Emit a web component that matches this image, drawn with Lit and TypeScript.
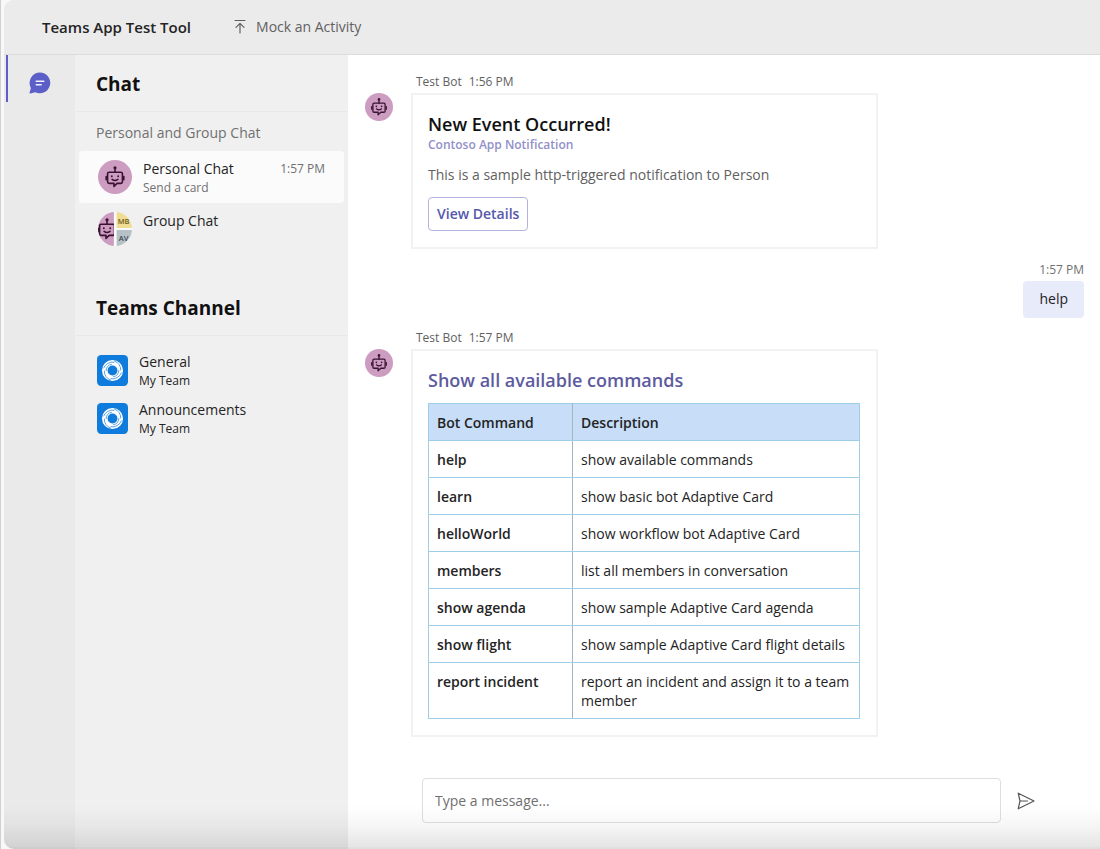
import { LitElement, html, css, svg } from "lit";
import { customElement, property, state } from "lit/decorators.js";

const robot = svg`
  <g fill="none" stroke="#3a1232" stroke-width="1.5" stroke-linejoin="round" stroke-linecap="round">
    <path d="M10.5 11.5h11a1.5 1.5 0 0 1 1.5 1.5v7.5a1.5 1.5 0 0 1-1.5 1.5h-3.5L15 24.8V22h-4.5a1.5 1.5 0 0 1-1.5-1.5V13a1.5 1.5 0 0 1 1.5-1.5z"/>
    <path d="M16 11.5V8M7.7 15.5v3M24.3 15.5v3M13.3 18.3q2.7 2 5.4 0"/>
  </g>
  <g fill="#3a1232"><circle cx="16" cy="7.3" r="1.5"/><circle cx="13" cy="15.3" r=".9"/><circle cx="19" cy="15.3" r=".9"/></g>`;

@customElement("bot-avatar")
export class BotAvatar extends LitElement {
  static styles = css`
    :host { display: block; flex: none; width: 28px; height: 28px; }
    :host([large]) { width: 34px; height: 34px; }
    svg { display: block; width: 100%; height: 100%; }
  `;
  render() {
    return html`<svg viewBox="0 0 32 32" aria-hidden="true"><circle cx="16" cy="16" r="16" fill="#cc9cc1"/>${robot}</svg>`;
  }
}

@customElement("chat-message")
export class ChatMessage extends LitElement {
  @property() time = "";
  static styles = css`
    :host { display: grid; grid-template-columns: 28px minmax(0, 467px); column-gap: 18px; }
    .meta { grid-column: 2; padding-left: 5px; display: flex; gap: 7px; font-size: 12px; line-height: 18px; color: #616161; margin-bottom: 2px; }
    .card { box-sizing: border-box; border: 2px solid #f2f2f2; padding: 16px; padding-left: 15px; background: #fff; }
  `;
  render() {
    return html`
      <div class="meta"><span>Test Bot</span><span>${this.time}</span></div>
      <bot-avatar></bot-avatar>
      <div class="card"><slot></slot></div>`;
  }
}

const commands: [string, string][] = [
  ["help", "show available commands"],
  ["learn", "show basic bot Adaptive Card"],
  ["helloWorld", "show workflow bot Adaptive Card"],
  ["members", "list all members in conversation"],
  ["show agenda", "show sample Adaptive Card agenda"],
  ["show flight", "show sample Adaptive Card flight details"],
  ["report incident", "report an incident and assign it to a team member"],
];

@customElement("app-root")
export class AppRoot extends LitElement {
  @state() private draft = "";

  static styles = css`
    :host { display: block; font-family: "Open Sans", "Noto Sans", sans-serif; font-size: 14px; line-height: 20px; color: #242424; background: #f6f6f6; }
    button, input { font: inherit; color: inherit; }
    button { cursor: pointer; }
    h1, h2, h3, p { margin: 0; }
    .window { box-sizing: border-box; min-height: 100vh; display: grid; grid-template: 55px 1fr / 71px 273px minmax(0, 1fr); margin-left: 4px; border-radius: 10px 0 0 10px; overflow: hidden; position: relative; background: #ebebeb; }
    .frame { background: linear-gradient(90deg, #d0d0d4 0 1px, #f8f8f8 1px); }
    .window::after { content: ""; position: absolute; inset: auto 0 0 0; height: 44px; pointer-events: none; background: linear-gradient(transparent, rgba(0, 0, 0, 0.03) 45%, rgba(0, 0, 0, 0.1)); border-bottom: 2px solid rgba(0, 0, 0, 0.12); box-sizing: border-box; }
    .top { grid-column: 1 / -1; display: flex; align-items: center; gap: 42px; padding-left: 38px; border-bottom: 1px solid #dcdcdc; background: #ebebeb; }
    .brand { font-size: 15px; font-weight: 600; }
    .mock { display: flex; align-items: center; gap: 9px; border: 0; background: none; padding: 0; color: #616161; }
    .rail { background: #eaeaea; padding-left: 2px; }
    .railbtn { display: flex; align-items: center; width: 100%; height: 47px; border: 0; border-left: 2px solid #5b5fc7; background: none; padding: 8px 0 0 21px; }
    .side { background: #f0f0f0; }
    .title { font-size: 19px; line-height: 28px; font-weight: 700; color: #111; padding: 15px 21px 13px; border-bottom: 1px solid #e8e8e8; }
    .second { margin-top: 24px; }
    .sub { padding: 11px 21px 8px; color: #707070; }
    .list { display: grid; }
    .chat { display: flex; align-items: start; gap: 11px; margin: 0 4px; padding: 8px 19px; height: 52px; border: 0; background: none; border-radius: 4px; text-align: left; }
    .chat.on { background: #fbfbfb; }
    .label { display: grid; flex: 1; }
    .label small { font-size: 12px; line-height: 17px; color: #707070; }
    .stamp { font-size: 12px; line-height: 20px; color: #707070; }
    .avatar { flex: none; display: block; }
    .chat > :first-child { align-self: center; }
    .teams { padding: 14px 22px; gap: 8px; }
    .team { display: flex; align-items: center; gap: 11px; border: 0; background: none; padding: 0; text-align: left; height: 40px; }
    .team .label small { color: #242424; }
    .main { background: #fff; display: flex; flex-direction: column; padding: 18px 16px 26px 17px; }
    .head { font-size: 18px; line-height: 26px; font-weight: 600; color: #111; }
    .blue { color: #5d5b9e; }
    .by { font-size: 12px; line-height: 16px; font-weight: 600; color: #9290c9; }
    .text { margin: 12px 0; color: #616161; }
    .action { height: 34px; padding: 0 8px; border: 1px solid #b2b4dd; border-radius: 4px; background: #fff; color: #5558ab; font-weight: 600; }
    .mine { align-self: end; display: grid; justify-items: end; margin: 11px 0; }
    .bubble { background: #e8ebfa; border-radius: 4px; padding: 8px 16px 9px; margin-top: 1px; }
    table { width: 100%; margin-top: 10px; border-collapse: collapse; table-layout: fixed; border: 1px solid #90d0f3; }
    th, td { text-align: left; vertical-align: top; padding: 9px 4px 8px 8px; line-height: 19px; border: 1px solid #9fcee8; }
    th { font-weight: 600; }
    thead th { background: #c7ddf8; }
    th:first-child { width: 131px; border-right-color: #a3b4c2; }
    .compose { display: flex; align-items: center; gap: 16px; margin-top: auto; padding-left: 57px; padding-right: 49px; }
    .compose input { flex: 1; min-width: 0; box-sizing: border-box; height: 45px; border: 1px solid #dedede; border-radius: 4px; padding: 0 12px; background: #fff; outline: none; }
    .compose input::placeholder { color: #707070; opacity: 1; }
    .send { border: 0; background: none; padding: 0; display: flex; }
  `;

  private group() {
    return html`<svg class="avatar" width="34" height="34" viewBox="0 0 32 32" aria-hidden="true">
      <defs><clipPath id="round"><circle cx="16" cy="16" r="16"/></clipPath><clipPath id="half"><path d="M0 0h15v32H0z"/></clipPath></defs>
      <g clip-path="url(#round)">
        <path d="M15 0h3v32h-3zM17 14h15v3H17z" fill="#fafafa"/>
        <g clip-path="url(#half)"><path d="M0 0h15v32H0z" fill="#cc9cc1"/><g transform="translate(-7.5 0)">${robot}</g></g>
        <path d="M17.5 0H32v15H17.500z" fill="#f0dc92"/><path d="M17.5 17H32v15H17.500z" fill="#b6c1c7"/>
        <text x="18.5" y="11" font-size="7" font-weight="600" fill="#6c5b1e">MB</text>
        <text x="19.5" y="27" font-size="7" font-weight="600" fill="#3b474d">AV</text>
      </g></svg>`;
  }

  private team(name: string) {
    return html`<button class="team">
      <svg class="avatar" width="31" height="31" viewBox="0 0 30 30" aria-hidden="true">
        <rect width="30" height="30" rx="4" fill="#0f7bdc"/>
        <circle cx="15" cy="15" r="7.5" fill="none" stroke="#fff" stroke-width="5.4"/>
        <path d="M6.5 12.5a9 9 0 0 1 10-5.5M17 5.8a9.5 9.5 0 0 1 6 8.7M23.5 17.5a9 9 0 0 1-10 5.5M13 24.2a9.5 9.5 0 0 1-6-8.7M8.8 15a6.3 6.3 0 0 1 5.2-6M21.2 15a6.3 6.3 0 0 1-5.2 6" fill="none" stroke="#4a9ce4" stroke-width=".9" stroke-linecap="round"/>
      </svg>
      <span class="label"><span>${name}</span><small>My Team</small></span>
    </button>`;
  }

  render() {
    return html`<div class="frame"><div class="window">
      <header class="top">
        <h1 class="brand">Teams App Test Tool</h1>
        <button class="mock">
          <svg width="14" height="16" viewBox="0 0 14 16" fill="none" stroke="#616161" stroke-width="1.2" stroke-linecap="round" stroke-linejoin="round" aria-hidden="true"><path d="M2 1.5h10M7 14V4.5M3 8.3l4-4 4 4"/></svg>
          Mock an Activity
        </button>
      </header>
      <nav class="rail"><button class="railbtn" aria-label="Chat">
        <svg width="22" height="22" viewBox="0 0 22 22" aria-hidden="true"><path d="M11 .5A10.4 10.4 0 1 1 6.2 20.2L1.3 21.4Q.4 21.5.6 20.6L1.9 16A10.4 10.4 0 0 1 11 .5z" fill="#5b5fc7"/><path d="M7.2 9.3h7.6M7.2 12.8h5" stroke="#f0f0ff" stroke-width="1.5" stroke-linecap="round"/></svg>
      </button></nav>
      <aside class="side">
        <h2 class="title">Chat</h2>
        <p class="sub">Personal and Group Chat</p>
        <div class="list">
          <button class="chat on"><bot-avatar large></bot-avatar><span class="label"><span>Personal Chat</span><small>Send a card</small></span><span class="stamp">1:57 PM</span></button>
          <button class="chat">${this.group()}<span class="label">Group Chat</span></button>
        </div>
        <h2 class="title second">Teams Channel</h2>
        <div class="list teams">${this.team("General")}${this.team("Announcements")}</div>
      </aside>
      <main class="main">
        <chat-message time="1:56 PM">
          <h3 class="head">New Event Occurred!</h3>
          <p class="by">Contoso App Notification</p>
          <p class="text">This is a sample http-triggered notification to Person</p>
          <button class="action">View Details</button>
        </chat-message>
        <div class="mine"><span class="stamp">1:57 PM</span><span class="bubble">help</span></div>
        <chat-message time="1:57 PM">
          <h3 class="head blue">Show all available commands</h3>
          <table>
            <thead><tr><th scope="col">Bot Command</th><th scope="col">Description</th></tr></thead>
            <tbody>${commands.map(([name, text]) => html`<tr><th scope="row">${name}</th><td>${text}</td></tr>`)}</tbody>
          </table>
        </chat-message>
        <form class="compose" @submit=${(e: Event) => e.preventDefault()}>
          <input aria-label="Message" placeholder="Type a message..." .value=${this.draft} @input=${(e: Event) => { this.draft = (e.target as HTMLInputElement).value; }}>
          <button class="send" aria-label="Send"><svg width="18" height="18" viewBox="0 0 18 18" fill="none" stroke="#555" stroke-width="1.2" stroke-linejoin="round" stroke-linecap="round" aria-hidden="true"><path d="M1.2 1.2L17 9 1.2 16.8 3 9zM3 9h7.5"/></svg></button>
        </form>
      </main>
    </div></div>`;
  }
}
